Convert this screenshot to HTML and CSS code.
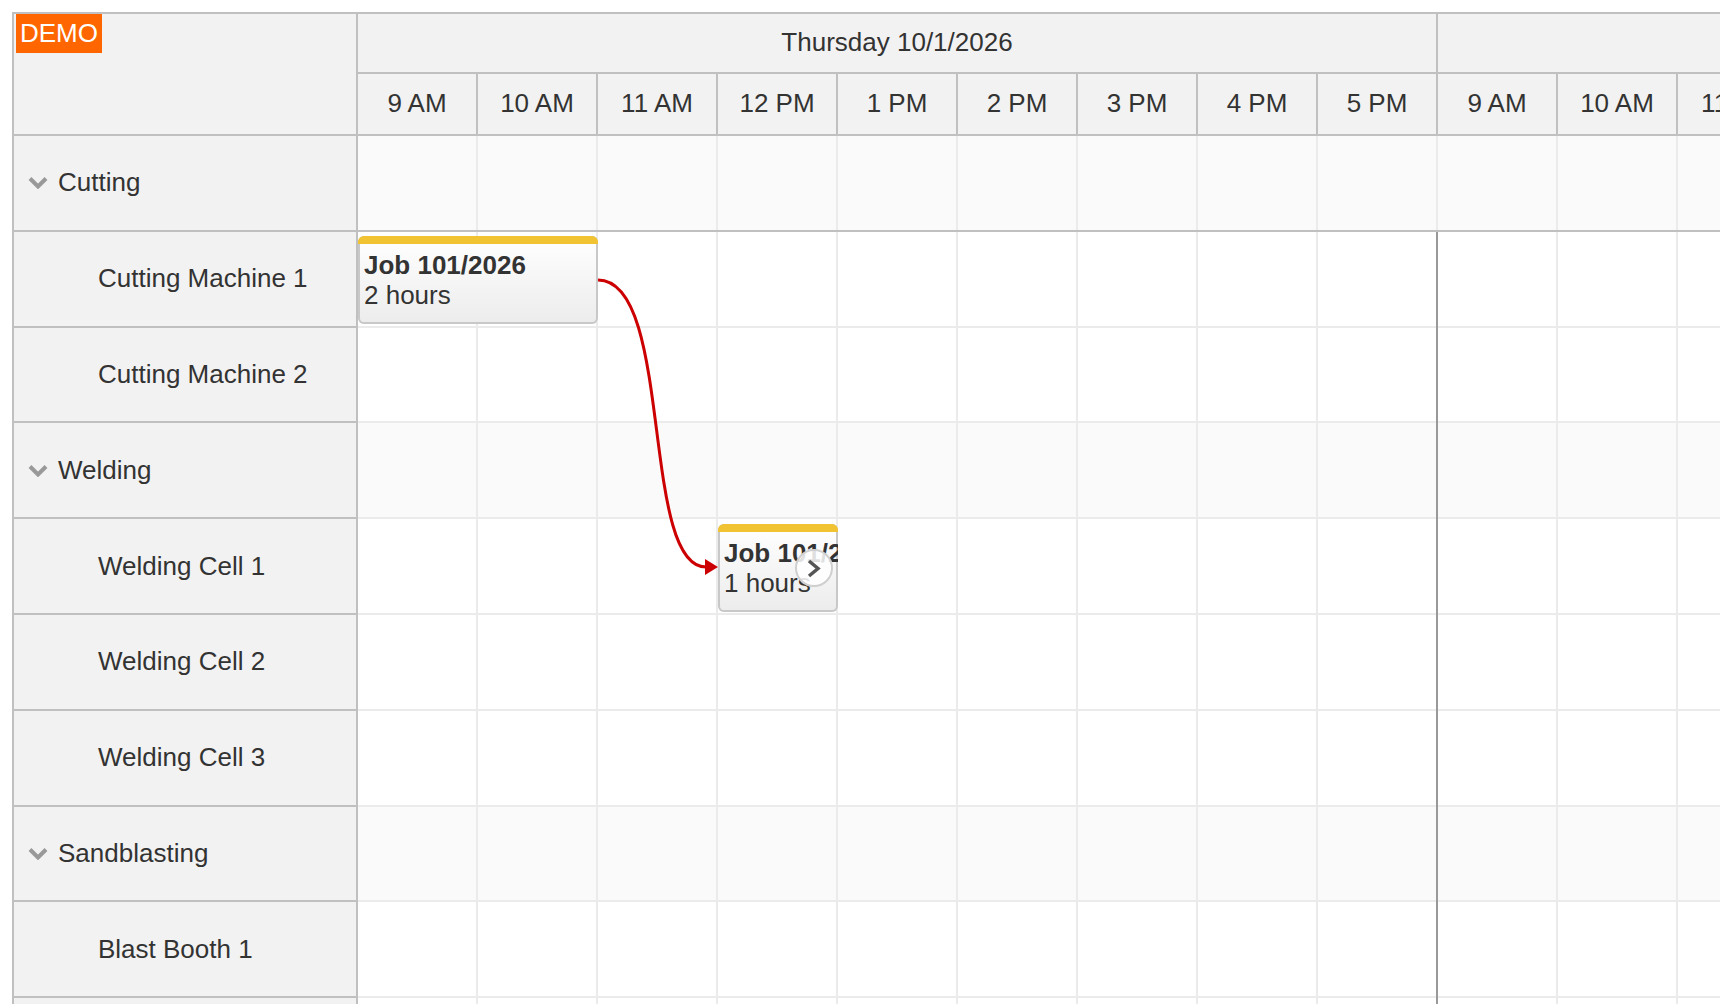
FILE: index.html
```html
<!DOCTYPE html>
<html lang="en">
<head>
    <meta charset="UTF-8">
    <meta name="viewport" content="width=device-width, initial-scale=1.0">
    <title>Production Scheduler</title>
    <link rel="stylesheet" href="styles.css">
</head>
<body>
    <div class="scheduler">

        <!-- Resource column -->
        <div class="rows">
            <div class="corner"><span class="demo">DEMO</span></div>

            <div class="row-header group">
                <svg class="toggle" viewBox="0 0 20 13"><polyline points="2,2.5 10,10.5 18,2.5"/></svg>Cutting
            </div>
            <div class="row-header">Cutting Machine 1</div>
            <div class="row-header">Cutting Machine 2</div>

            <div class="row-header group">
                <svg class="toggle" viewBox="0 0 20 13"><polyline points="2,2.5 10,10.5 18,2.5"/></svg>Welding
            </div>
            <div class="row-header">Welding Cell 1</div>
            <div class="row-header">Welding Cell 2</div>
            <div class="row-header">Welding Cell 3</div>

            <div class="row-header group">
                <svg class="toggle" viewBox="0 0 20 13"><polyline points="2,2.5 10,10.5 18,2.5"/></svg>Sandblasting
            </div>
            <div class="row-header">Blast Booth 1</div>
            <div class="row-header"></div>
        </div>

        <!-- Time header + grid -->
        <div class="main">
            <div class="days">
                <div class="day">Thursday 10/1/2026</div>
                <div class="day last"></div>
            </div>
            <div class="hours">
                <div class="hour">9 AM</div>
                <div class="hour">10 AM</div>
                <div class="hour">11 AM</div>
                <div class="hour">12 PM</div>
                <div class="hour">1 PM</div>
                <div class="hour">2 PM</div>
                <div class="hour">3 PM</div>
                <div class="hour">4 PM</div>
                <div class="hour">5 PM</div>
                <div class="hour">9 AM</div>
                <div class="hour">10 AM</div>
                <div class="hour">11 AM</div>
            </div>

            <div class="grid">
                <div class="lane group frozen"></div>
                <div class="lane"></div>
                <div class="lane"></div>
                <div class="lane group"></div>
                <div class="lane"></div>
                <div class="lane"></div>
                <div class="lane"></div>
                <div class="lane group"></div>
                <div class="lane"></div>
                <div class="lane"></div>

                <!-- day separator -->
                <div class="separator"></div>

                <!-- events -->
                <div class="event" style="left:0; top:100px; width:240px;">
                    <div class="bar"></div>
                    <div class="text"><b>Job 101/2026</b><br>2 hours</div>
                </div>
                <div class="event" style="left:360px; top:387.5px; width:120px;">
                    <div class="bar"></div>
                    <div class="text"><b>Job 101/2026</b><br>1 hours</div>
                    <div class="more">
                        <svg viewBox="0 0 34 34"><polyline points="12,10 21,17.5 12,25"/></svg>
                    </div>
                </div>

                <!-- link between jobs -->
                <svg class="links" width="1440" height="960">
                    <path d="M240,144 C316,144 282,431 348,431"/>
                    <polygon points="347,423 360,431 347,439"/>
                </svg>
            </div>
        </div>
    </div>
</body>
</html>
```

FILE: styles.css
```css
body {
    margin: 0;
    overflow: hidden;
    background: #fff;
    color: #333;
    font-family: "Liberation Sans", Arial, sans-serif;
    font-size: 26px;
}
.scheduler {
    display: flex;
    height: calc(100vh - 12px);
    overflow: hidden;
    margin: 12px 0 0 12px;
    border-left: 2px solid #c0c0c0;
    border-top: 2px solid #c0c0c0;
}

/* resource column */
.rows {
    flex: none;
    width: 344px;
    box-sizing: border-box;
    border-right: 2px solid #c0c0c0;
    background: #f2f2f2;
}
.corner {
    position: relative;
    height: 122px;
    box-sizing: border-box;
    border-bottom: 2px solid #c0c0c0;
}
.demo {
    position: absolute;
    left: 2px;
    top: 0;
    padding: 0 4px;
    line-height: 39px;
    background: #ff6600;
    color: #fff;
}
.row-header {
    display: flex;
    align-items: center;
    height: 95.8px;
    box-sizing: border-box;
    padding-left: 84px;
    border-bottom: 2px solid #c0c0c0;
    white-space: nowrap;
}
.row-header.group {
    padding-left: 14px;
}
.toggle {
    width: 20px;
    height: 13px;
    margin-right: 10px;
    fill: none;
    stroke: #999;
    stroke-width: 4;
}

/* time header */
.main {
    flex: none;
    width: 1440px;
}
.days, .hours {
    display: flex;
    background: #f2f2f2;
}
.day, .hour {
    flex: none;
    display: flex;
    align-items: center;
    justify-content: center;
    box-sizing: border-box;
    padding-bottom: 2px;
    border-right: 2px solid #c0c0c0;
    border-bottom: 2px solid #c0c0c0;
    white-space: nowrap;
}
.day {
    width: 1080px;
    height: 60px;
}
.day.last {
    width: 360px;
}
.hour {
    width: 120px;
    height: 62px;
}

/* grid */
.grid {
    position: relative;
}
.lane {
    height: 95.8px;
    box-sizing: border-box;
    border-bottom: 2px solid #ebebeb;
    background: linear-gradient(to right, transparent 118px, #ebebeb 118px) 0 0 / 120px 100% #fff;
}
.lane.group {
    background-color: #fafafa;
}
.lane.frozen {
    border-bottom-color: #c0c0c0;
}
.separator {
    position: absolute;
    left: 1078px;
    top: 95.8px;
    bottom: 0;
    width: 2px;
    background: #999;
}

/* events */
.event {
    position: absolute;
    height: 88px;
    box-sizing: border-box;
    overflow: hidden;
    border-radius: 6px;
    background: linear-gradient(#fff, #ececec);
    box-shadow: inset 0 0 0 2px #c8c8c8;
}
.event .bar {
    height: 8px;
    background: #f1c232;
}
.event .text {
    padding: 6px 6px 0;
    line-height: 30px;
    white-space: nowrap;
}
.more {
    position: absolute;
    left: 77px;
    top: 25px;
    width: 38px;
    height: 38px;
    box-sizing: border-box;
    border: 2px solid #cfcfcf;
    border-radius: 50%;
    background: rgba(255, 255, 255, 0.85);
}
.more svg {
    display: block;
    width: 34px;
    height: 34px;
    fill: none;
    stroke: #555;
    stroke-width: 3.5;
}
.links {
    position: absolute;
    left: 0;
    top: 0;
    overflow: visible;
    pointer-events: none;
}
.links path {
    fill: none;
    stroke: #cc0000;
    stroke-width: 3;
}
.links polygon {
    fill: #cc0000;
}
```
